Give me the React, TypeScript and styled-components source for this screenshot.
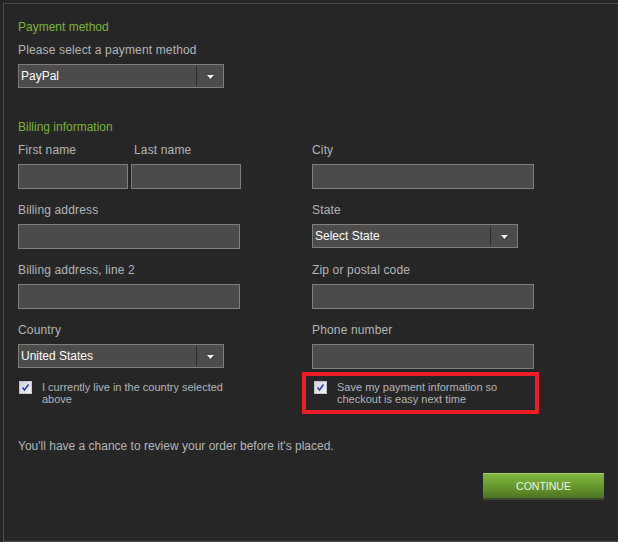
import React from "react";
import styled, { createGlobalStyle } from "styled-components";

const Global = createGlobalStyle`
  html, body { margin: 0; padding: 0; background: #262626; }
  body { width: 618px; height: 542px; overflow: hidden; font-family: "Liberation Sans", Arial, sans-serif; }
`;

const Panel = styled.div`
  box-sizing: border-box;
  margin: 3px 0 0 3px;
  width: 615px;
  height: 539px;
  border-top: 1px solid #4e4e4e;
  border-left: 1px solid #4e4e4e;
  border-bottom: 1px solid #4e4e4e;
  padding: 16px 14px 0 14px;
  display: flex;
  flex-direction: column;
`;

const Heading = styled.div`
  color: #7bb634;
  font-size: 12px;
  line-height: 14px;
  height: 14px;
  margin-bottom: 9px;
`;

const Label = styled.div<{ $indent?: number }>`
  color: #b3b6b9;
  font-size: 12px;
  line-height: 14px;
  height: 14px;
  letter-spacing: 0.15px;
  margin-bottom: 7px;
  padding-left: ${(p) => p.$indent ?? 0}px;
  white-space: nowrap;
`;

const Field = styled.div<{ $w?: number }>`
  display: flex;
  flex-direction: column;
  min-height: 46px;
  width: ${(p) => (p.$w ? `${p.$w}px` : "auto")};
`;

const TextInput = styled.div<{ $w: number }>`
  box-sizing: border-box;
  width: ${(p) => p.$w}px;
  height: 25px;
  background: #4c4b49;
  border: 1px solid #7e7e7c;
`;

const SelectBox = styled.div`
  box-sizing: border-box;
  width: 206px;
  height: 24px;
  background: #4c4b49;
  border: 1px solid #7e7e7c;
  display: flex;
  align-items: center;
`;

const SelectText = styled.span`
  flex: 1;
  color: #ffffff;
  font-size: 12px;
  padding-left: 2px;
  white-space: nowrap;
`;

const SelectDivider = styled.span`
  width: 1px;
  height: 20px;
  background: #2c2c2b;
  margin-right: 9px;
`;

const ArrowWrap = styled.span`
  width: 17px;
  display: flex;
  align-items: center;
  justify-content: flex-start;
  padding-top: 1px;
`;

const Spacer = styled.div<{ $h: number }>`
  height: ${(p) => p.$h}px;
  flex: none;
`;

const Columns = styled.div`
  display: grid;
  grid-template-columns: 294px 1fr;
  align-items: start;
`;

const Column = styled.div`
  display: flex;
  flex-direction: column;
  gap: 14px;
`;

const NameRow = styled.div`
  display: flex;
  gap: 3px;
`;

const CheckRow = styled.div<{ $lift?: number }>`
  display: flex;
  align-items: flex-start;
  gap: 10px;
  padding-left: 1px;
  margin-top: ${(p) => -(p.$lift ?? 0)}px;
`;

const CheckText = styled.span<{ $w: number }>`
  color: #b3b6b9;
  font-size: 11px;
  line-height: 12px;
  width: ${(p) => p.$w}px;
`;

const Box = styled.span`
  box-sizing: border-box;
  flex: none;
  width: 13px;
  height: 13px;
  border: 1px solid #c4c6d2;
  background: linear-gradient(135deg, #cfd1e0 0%, #f4f4f8 100%);
  display: flex;
  align-items: center;
  justify-content: center;
`;

const Highlight = styled.div`
  box-sizing: border-box;
  margin: -11px 0 0 -10px;
  width: 237px;
  border: 4px solid #ee1d25;
  padding: 5px 0 5px 7px;
`;

const Note = styled.div`
  color: #b3b6b9;
  font-size: 12px;
  line-height: 14px;
  margin-top: 25px;
`;

const ButtonRow = styled.div`
  display: flex;
  justify-content: flex-end;
  margin-top: 20px;
`;

const Button = styled.button`
  box-sizing: border-box;
  width: 121px;
  height: 27px;
  border: none;
  border-top: 1px solid #a8d070;
  border-bottom: 2px solid #3b4a2d;
  background: linear-gradient(#80b840 0%, #6a9d30 45%, #4d7421 100%);
  color: #eef4e4;
  font-family: "Liberation Sans", Arial, sans-serif;
  font-size: 10.5px;
  padding: 0;
  cursor: pointer;
`;

const Arrow = () => (
  <svg width="9" height="6" viewBox="0 0 9 6">
    <path d="M1 1 L8 1 L4.5 5 Z" fill="#1a1a1a" transform="translate(0.6 0.6)" />
    <path d="M1 1 L8 1 L4.5 5 Z" fill="#ffffff" />
  </svg>
);

const Check = () => (
  <svg width="9" height="9" viewBox="0 0 9 9">
    <path d="M1.5 4.5 L3.5 7 L7.5 1.5" fill="none" stroke="#2b3aa8" strokeWidth="1.5" />
  </svg>
);

const Select = ({ value }: { value: string }) => (
  <SelectBox>
    <SelectText>{value}</SelectText>
    <SelectDivider />
    <ArrowWrap>
      <Arrow />
    </ArrowWrap>
  </SelectBox>
);

export default function App() {
  return (
    <>
      <Global />
      <Panel>
        <Heading>Payment method</Heading>
        <Label>Please select a payment method</Label>
        <Select value="PayPal" />
        <Spacer $h={32} />
        <Heading>Billing information</Heading>
        <Columns>
          <Column>
            <NameRow>
              <Field $w={110}>
                <Label>First name</Label>
                <TextInput $w={110} />
              </Field>
              <Field $w={110}>
                <Label $indent={3}>Last name</Label>
                <TextInput $w={110} />
              </Field>
            </NameRow>
            <Field>
              <Label>Billing address</Label>
              <TextInput $w={222} />
            </Field>
            <Field>
              <Label>Billing address, line 2</Label>
              <TextInput $w={222} />
            </Field>
            <Field>
              <Label>Country</Label>
              <Select value="United States" />
            </Field>
            <CheckRow $lift={2}>
              <Box>
                <Check />
              </Box>
              <CheckText $w={200}>I currently live in the country selected above</CheckText>
            </CheckRow>
          </Column>
          <Column>
            <Field>
              <Label>City</Label>
              <TextInput $w={222} />
            </Field>
            <Field>
              <Label>State</Label>
              <Select value="Select State" />
            </Field>
            <Field>
              <Label>Zip or postal code</Label>
              <TextInput $w={222} />
            </Field>
            <Field>
              <Label>Phone number</Label>
              <TextInput $w={222} />
            </Field>
            <Highlight>
              <CheckRow>
                <Box>
                  <Check />
                </Box>
                <CheckText $w={180}>Save my payment information so checkout is easy next time</CheckText>
              </CheckRow>
            </Highlight>
          </Column>
        </Columns>
        <Note>You'll have a chance to review your order before it's placed.</Note>
        <ButtonRow>
          <Button>CONTINUE</Button>
        </ButtonRow>
      </Panel>
    </>
  );
}
